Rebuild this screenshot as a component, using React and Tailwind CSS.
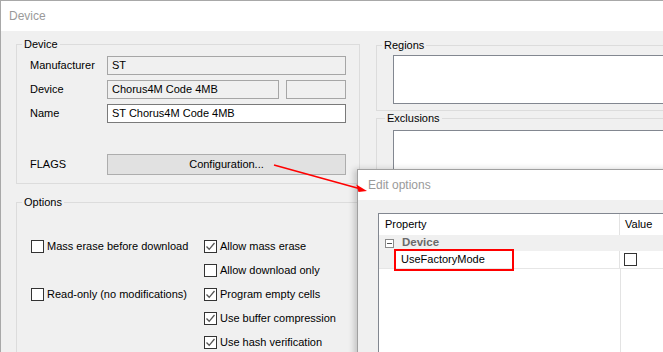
import React from 'react';

const font = { fontFamily: '"Liberation Sans", Arial, sans-serif' };

function Group({ label, labelClass = 'ml-[5px]', className = '', innerClass = '', children }) {
  return (
    <div className={`border border-[#dcdcdc] flex flex-col ${className}`}>
      <div className={`-mt-[8px] ${labelClass} px-[2px] w-fit bg-[#f0f0f0] leading-[14px]`}>{label}</div>
      <div className={innerClass}>{children}</div>
    </div>
  );
}

function Check({ checked, label }) {
  return (
    <div className="flex items-center h-[24px]">
      <div className="w-[13px] h-[13px] border border-[#333] bg-white flex items-center justify-center shrink-0">
        {checked && (
          <svg width="11" height="11" viewBox="0 0 11 11">
            <path d="M1.5 5.5 L4.2 8.3 L9.5 2" fill="none" stroke="#555" strokeWidth="1.3" />
          </svg>
        )}
      </div>
      <span className="ml-[3px] whitespace-nowrap">{label}</span>
    </div>
  );
}

function Field({ label, children }) {
  return (
    <div className="flex items-center h-[19px]">
      <span className="w-[77px] shrink-0">{label}</span>
      {children}
    </div>
  );
}

export default function App() {
  return (
    <div
      style={font}
      className="w-[663px] h-[352px] relative overflow-hidden bg-[#f0f0f0] border-l border-t border-[#a8a8a8] text-[11px] text-black"
    >
      <div className="h-[30px] bg-white flex items-center pl-[8px] text-[12px] text-[#9a9a9a]">Device</div>

      <div className="flex pl-[15px] pt-[13px] gap-[16px] w-max h-[330px]">
        {/* left column */}
        <div className="w-[344px] shrink-0 flex flex-col gap-[18px]">
          <Group label="Device" innerClass="px-[13px] pb-[8px]">
            <div className="flex flex-col gap-[5px] mt-[5px]">
              <Field label="Manufacturer">
                <div className="flex-1 h-[19px] border border-[#a6a6a6] bg-[#f0f0f0] flex items-center pl-[4px]">ST</div>
              </Field>
              <Field label="Device">
                <div className="w-[172px] h-[19px] border border-[#a6a6a6] bg-[#f0f0f0] flex items-center pl-[4px]">Chorus4M Code 4MB</div>
                <div className="flex-1 ml-[7px] h-[19px] border border-[#a6a6a6] bg-[#f0f0f0]" />
              </Field>
              <Field label="Name">
                <div className="flex-1 h-[19px] border border-[#7a7a7a] bg-white flex items-center pl-[4px]">ST Chorus4M Code 4MB</div>
              </Field>
              <div className="flex items-center h-[21px] mt-[26px]">
                <span className="w-[77px] shrink-0">FLAGS</span>
                <div className="flex-1 h-[21px] border border-[#adadad] bg-[#e1e1e1] flex items-center justify-center">
                  Configuration...
                </div>
              </div>
            </div>
          </Group>

          <Group label="Options" className="flex-1" innerClass="pl-[14px]">
            <div className="grid grid-cols-[173px_1fr] mt-[25px]">
              <Check label="Mass erase before download" />
              <Check checked label="Allow mass erase" />
              <div />
              <Check label="Allow download only" />
              <Check label="Read-only (no modifications)" />
              <Check checked label="Program empty cells" />
              <div />
              <Check checked label="Use buffer compression" />
              <div />
              <Check checked label="Use hash verification" />
            </div>
          </Group>
        </div>

        {/* right column */}
        <div className="w-[300px] shrink-0 flex flex-col mt-[1px] gap-[7px]">
          <Group label="Regions" innerClass="pl-[16px] pb-[6px]">
            <div className="mt-[3px] h-[49px] border border-[#828790] bg-white" />
          </Group>
          <Group label="Exclusions" labelClass="ml-[8px]" className="flex-1" innerClass="pl-[16px]">
            <div className="mt-[5px] h-[200px] border border-[#828790] bg-white" />
          </Group>
        </div>
      </div>

      {/* Edit options dialog */}
      <div className="absolute left-[356px] top-[168px] w-[330px] h-[200px] border border-[#a0a0a0] bg-[#f0f0f0] shadow-[-3px_0_6px_rgba(0,0,0,0.18)]">
        <div className="h-[30px] bg-white flex items-center pl-[10px] text-[12px] text-[#9a9a9a]">Edit options</div>
        <div className="pl-[20px] pt-[13px]">
          <div className="h-[160px] border border-[#828790] bg-white relative">
            <div className="flex h-[21px] items-center">
              <div className="w-[241px] pl-[6px] h-full flex items-center border-r border-[#e3e3e3]">Property</div>
              <div className="pl-[5px]">Value</div>
            </div>
            <div className="flex h-[16px] bg-[#f0f0f0] items-center">
              <div className="w-[9px] h-[9px] ml-[6px] border border-[#8a8a8a] bg-white flex items-center justify-center">
                <div className="w-[5px] h-px bg-[#555]" />
              </div>
              <span className="ml-[8px] font-bold text-[11.5px] text-[#6a6a6a]">Device</span>
            </div>
            <div className="flex h-[18px] border-b border-[#e6e6e6]">
              <div className="w-[15px] bg-[#f0f0f0]" />
              <div className="w-[226px] relative flex items-center pl-[7px] border-r border-[#e3e3e3]">
                UseFactoryMode
                <div className="absolute left-0 -top-[2px] w-[120px] h-[22px] border-2 border-[#ff0000]" />
              </div>
              <div className="pl-[4px] flex items-center">
                <div className="w-[13px] h-[13px] border border-[#333] bg-white" />
              </div>
            </div>
            <div className="absolute left-[241px] top-[55px] bottom-0 w-px bg-[#e3e3e3]" />
          </div>
        </div>
      </div>

      {/* red arrow */}
      <svg className="absolute left-0 top-0 pointer-events-none" width="663" height="352">
        <line x1="273" y1="164" x2="358" y2="187.5" stroke="#ff0000" strokeWidth="1.6" />
        <polygon points="366,190 355.3,183.4 357.5,191.1" fill="#ff0000" />
      </svg>
    </div>
  );
}
